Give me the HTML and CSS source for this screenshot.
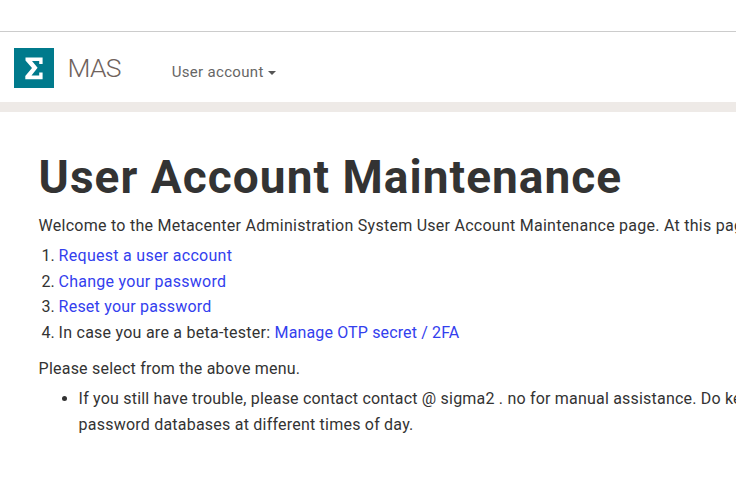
FILE: index.html
```html
<!DOCTYPE html>
<html lang="en">
<head>
<meta charset="utf-8">
<title>User Account Maintenance</title>
<link rel="stylesheet" href="styles.css">
</head>
<body>
<header class="navbar">
  <svg class="logo" viewBox="0 0 40 40" aria-hidden="true"><path d="M0 0h40v40H0z" fill="#007a8c"/><path d="M11.5 9.6H28.6V16H25.2V13H18L23.6 19.8L17.5 27.6H25.2V24.5H28.6V31.2H11.3V28L18 20L11.5 12.5Z" fill="#fff"/></svg>
  <a class="brand">MAS</a>
  <a class="menu">User account<i class="caret"></i></a>
</header>
<main class="content">
  <h1>User Account Maintenance</h1>
  <p class="intro">Welcome to the Metacenter Administration System User Account Maintenance page. At this page</p>
  <ol class="steps">
    <li><a class="request">Request a user account</a></li>
    <li><a class="change">Change your password</a></li>
    <li><a class="reset">Reset your password</a></li>
    <li><span class="tester">In case you are a beta-tester: </span><a class="otp">Manage OTP secret / 2FA</a></li>
  </ol>
  <p class="select">Please select from the above menu.</p>
  <ul class="help">
    <li>If you still have trouble, please contact contact @ sigma2 . no for manual assistance. Do ke<br><span class="databases">password databases at different times of day.</span></li>
  </ul>
</main>
</body>
</html>
```
FILE: styles.css
```css
* { box-sizing: border-box; }
body { margin: 0; padding-top: 31px; background: #fff; color: #333; font: 16px/25.6px Roboto, sans-serif; overflow: hidden; }
.navbar { display: flex; align-items: center; height: 81px; padding-left: 14px; border-top: 1px solid #ccc; border-bottom: 10px solid #eeeae7; }
.logo { width: 40px; height: 40px; margin-top: 2px; }
.brand { margin-left: 13.5px; padding-top: 1px; width: 104.2px; font-size: 26.5px; font-weight: 300; letter-spacing: -0.7px; color: #70635d; }
.menu { display: flex; align-items: center; font-size: 15px; letter-spacing: 0.32px; color: #666; padding-top: 11px; }
.caret { margin-left: 4px; border: 4px solid transparent; border-top-color: #555; border-bottom: 0; }
.content { padding: 39px 0 0 38.6px; white-space: nowrap; }
h1 { margin: 0 0 9px; font-size: 46px; line-height: 53px; font-weight: 700; letter-spacing: 1.04px; }
p { margin: 0; }
.intro { letter-spacing: 0.258px; }
.steps { margin: 4.6px 0 10px; padding-left: 20px; }
.help { margin: 5px 0 0; padding-left: 40px; letter-spacing: 0.2px; line-height: 26px; }
.steps a { color: #3340ee; }
.request { letter-spacing: 0.29px; }
.change, .tester { letter-spacing: 0.25px; }
.reset, .select, .databases { letter-spacing: 0.22px; }
.otp { letter-spacing: 0.14px; }
```
